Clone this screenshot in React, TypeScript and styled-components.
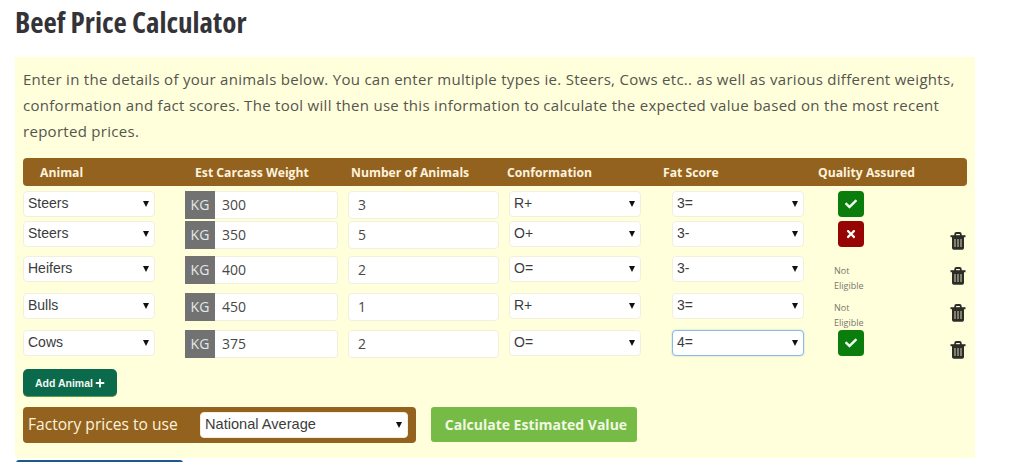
import styled, { createGlobalStyle } from "styled-components";
import { FaCheck, FaPlus, FaTimes } from "react-icons/fa";

const GlobalStyle = createGlobalStyle`
  html, body {
    margin: 0;
    padding: 0;
    height: 462px;
    overflow: hidden;
    background: #fff;
    font-family: "Open Sans", sans-serif;
  }
  * {
    box-sizing: border-box;
  }
`

const Page = styled.div`
  padding: 0 49px 0 15px;
  position: relative;
  height: 462px;
`
const Title = styled.h1`
  margin: 0;
  height: 57px;
  padding-top: 4px;
  font-size: 29px;
  line-height: 36px;
  font-weight: 700;
  font-stretch: condensed;
  color: #333338;
`
const Panel = styled.div`
  background: #ffffdc;
  height: 401px;
  padding: 9px 8px 0;
`
const Intro = styled.p`
  margin: 0 0 14px;
  font-size: 15px;
  line-height: 26px;
  letter-spacing: 0.29px;
  color: #55554e;
`
const HeaderBar = styled.div`
  display: grid;
  grid-template-columns: 155px 156px 156px 156px 155px 1fr;
  align-items: center;
  height: 28px;
  margin-bottom: 5px;
  padding-left: 17px;
  background: #94621f;
  border-radius: 4px;
  color: #fdf3dc;
  font-size: 12.2px;
  font-weight: 700;
`
const Row = styled.div<{ $height: number }>`
  display: grid;
  grid-template-columns: 162px 163px 161px 163px 162px 116px 16px;
  height: ${props => props.$height}px;
`
const SelectWrap = styled.div`
  position: relative;
  width: 132px;
  height: 26px;

  &::after {
    content: "";
    position: absolute;
    right: 6px;
    top: 10px;
    border-left: 3px solid transparent;
    border-right: 3px solid transparent;
    border-top: 6px solid #111;
    pointer-events: none;
  }
`
const Select = styled.select<{ $focus?: boolean }>`
  appearance: none;
  width: 100%;
  height: 100%;
  padding: 0 0 2px 4px;
  background: #fff;
  border: 1px solid ${props => props.$focus ? "#8db9e2" : "#f2f0dc"};
  border-radius: 4px;
  box-shadow: ${props => props.$focus ? "0 0 2px #a9cdec" : "none"};
  font-family: "Liberation Sans", Arial, sans-serif;
  font-size: 14px;
  color: #3c3c3c;
`
const WeightGroup = styled.div`
  display: flex;
  width: 153px;
  height: 28px;
`
const KgLabel = styled.span`
  width: 30px;
  background: #727272;
  color: #e4e8e8;
  font-size: 14px;
  line-height: 27px;
  text-align: center;
`
const WeightInput = styled.input`
  flex: 1;
  min-width: 0;
  height: 28px;
  padding: 0 0 1px 7px;
  background: #fff;
  border: 1px solid #f2f0dc;
  border-left: 0;
  border-radius: 0 4px 4px 0;
  font-family: "Open Sans", sans-serif;
  font-size: 14px;
  color: #484848;
`
const CountInput = styled.input`
  width: 151px;
  height: 28px;
  padding: 0 0 1px 9px;
  background: #fff;
  border: 1px solid #f2f0dc;
  border-radius: 4px;
  font-family: "Open Sans", sans-serif;
  font-size: 14px;
  color: #484848;
`
const QaButton = styled.button<{ $ok: boolean }>`
  display: flex;
  align-items: center;
  justify-content: center;
  width: 26px;
  height: 26px;
  margin-left: 4px;
  padding: 0;
  border: 0;
  border-radius: 4px;
  background: ${props => props.$ok ? "#0a7d0c" : "#960404"};
  color: #f4fff4;
  font-size: 12px;
`
const NotEligible = styled.div`
  width: 40px;
  padding-top: 7px;
  font-size: 9px;
  line-height: 15px;
  color: #77776c;
`
const TrashCell = styled.div`
  padding-top: 11px;
  color: #2c2c28;
`
const AddButton = styled.button`
  display: flex;
  align-items: center;
  justify-content: center;
  gap: 2px;
  width: 94px;
  height: 28px;
  margin-top: 2px;
  padding: 0;
  background: #0b6a4b;
  border: 0;
  border-bottom: 1px solid #5fa04a;
  border-radius: 5px;
  color: #f2f8f2;
  font-family: "Liberation Sans", Arial, sans-serif;
  font-size: 10.5px;
  font-weight: 700;
`
const BottomRow = styled.div`
  display: flex;
  align-items: flex-start;
  gap: 15px;
  margin-top: 10px;
`
const FactoryBar = styled.div`
  display: flex;
  align-items: center;
  justify-content: space-between;
  width: 393px;
  height: 36px;
  padding: 0 8px 3px 5px;
  background: #94621f;
  border-radius: 4px;
  color: #fdf3dc;
  font-size: 15.6px;
`
const FactorySelect = styled(SelectWrap)`
  width: 208px;
  margin-top: 3px;

  select {
    font-size: 14.6px;
  }
`
const CalcButton = styled.button`
  width: 206px;
  height: 35px;
  padding: 0 0 0 4px;
  background: #76bb45;
  border: 0;
  border-radius: 3px;
  color: #f0f8e4;
  font-family: "Open Sans", sans-serif;
  font-size: 14px;
  font-weight: 700;
`
const NextButtonEdge = styled.div`
  position: absolute;
  left: 16px;
  top: 460px;
  width: 167px;
  height: 6px;
  background: #1c5a8c;
  border-radius: 3px;
`

function TrashIcon() {
    return (
        <svg width="16" height="18" viewBox="0 0 16 18">
            <path d="M.5 3.2h15v2H.5z" fill="currentColor" />
            <path d="M5.2 4V2.2C5.2 1.5 5.7 1 6.4 1h3.2c.7 0 1.2.5 1.2 1.2V4" fill="none" stroke="currentColor" strokeWidth="1.8" />
            <path d="M2 4.5h12v11.3c0 1.1-.7 1.9-1.6 1.9H3.6c-.9 0-1.6-.8-1.6-1.9z" fill="currentColor" />
            <path d="M5 7v8M8 7v8M11 7v8" fill="none" stroke="#c9c6a4" strokeWidth="1.1" />
        </svg>
    )
}

interface IAnimal {
    animal: string,
    weight: string,
    count: string,
    conformation: string,
    fat: string,
    quality: "yes" | "no" | "na",
    height: number,
    trash: boolean,
    focus?: boolean
}

const animals: IAnimal[] = [
    { animal: "Steers", weight: "300", count: "3", conformation: "R+", fat: "3=", quality: "yes", height: 30, trash: false },
    { animal: "Steers", weight: "350", count: "5", conformation: "O+", fat: "3-", quality: "no", height: 35, trash: true },
    { animal: "Heifers", weight: "400", count: "2", conformation: "O=", fat: "3-", quality: "na", height: 37, trash: true },
    { animal: "Bulls", weight: "450", count: "1", conformation: "R+", fat: "3=", quality: "na", height: 37, trash: true },
    { animal: "Cows", weight: "375", count: "2", conformation: "O=", fat: "4=", quality: "yes", height: 37, trash: true, focus: true },
]

function App() {
    return (
        <Page>
            <GlobalStyle />
            <Title>Beef Price Calculator</Title>
            <Panel>
                <Intro>
                    Enter in the details of your animals below. You can enter multiple types ie. Steers, Cows etc.. as well as various different weights, conformation and fact scores. The tool will then use this information to calculate the expected value based on the most recent reported prices.
                </Intro>
                <HeaderBar>
                    <span>Animal</span>
                    <span>Est Carcass Weight</span>
                    <span>Number of Animals</span>
                    <span>Conformation</span>
                    <span>Fat Score</span>
                    <span>Quality Assured</span>
                </HeaderBar>
                {animals.map((row, idx) => (
                    <Row key={idx} $height={row.height}>
                        <SelectWrap>
                            <Select defaultValue={row.animal}><option>{row.animal}</option></Select>
                        </SelectWrap>
                        <WeightGroup>
                            <KgLabel>KG</KgLabel>
                            <WeightInput defaultValue={row.weight} />
                        </WeightGroup>
                        <CountInput defaultValue={row.count} />
                        <SelectWrap>
                            <Select defaultValue={row.conformation}><option>{row.conformation}</option></Select>
                        </SelectWrap>
                        <SelectWrap>
                            <Select $focus={row.focus} defaultValue={row.fat}><option>{row.fat}</option></Select>
                        </SelectWrap>
                        <div>
                            {row.quality === "na"
                                ? <NotEligible>Not Eligible</NotEligible>
                                : <QaButton $ok={row.quality === "yes"}>{row.quality === "yes" ? <FaCheck /> : <FaTimes />}</QaButton>}
                        </div>
                        <TrashCell>{row.trash && <TrashIcon />}</TrashCell>
                    </Row>
                ))}
                <AddButton>Add Animal <FaPlus size={10} /></AddButton>
                <BottomRow>
                    <FactoryBar>
                        Factory prices to use
                        <FactorySelect>
                            <Select defaultValue="National Average"><option>National Average</option></Select>
                        </FactorySelect>
                    </FactoryBar>
                    <CalcButton>Calculate Estimated Value</CalcButton>
                </BottomRow>
            </Panel>
            <NextButtonEdge />
        </Page>
    )
}

export default App
